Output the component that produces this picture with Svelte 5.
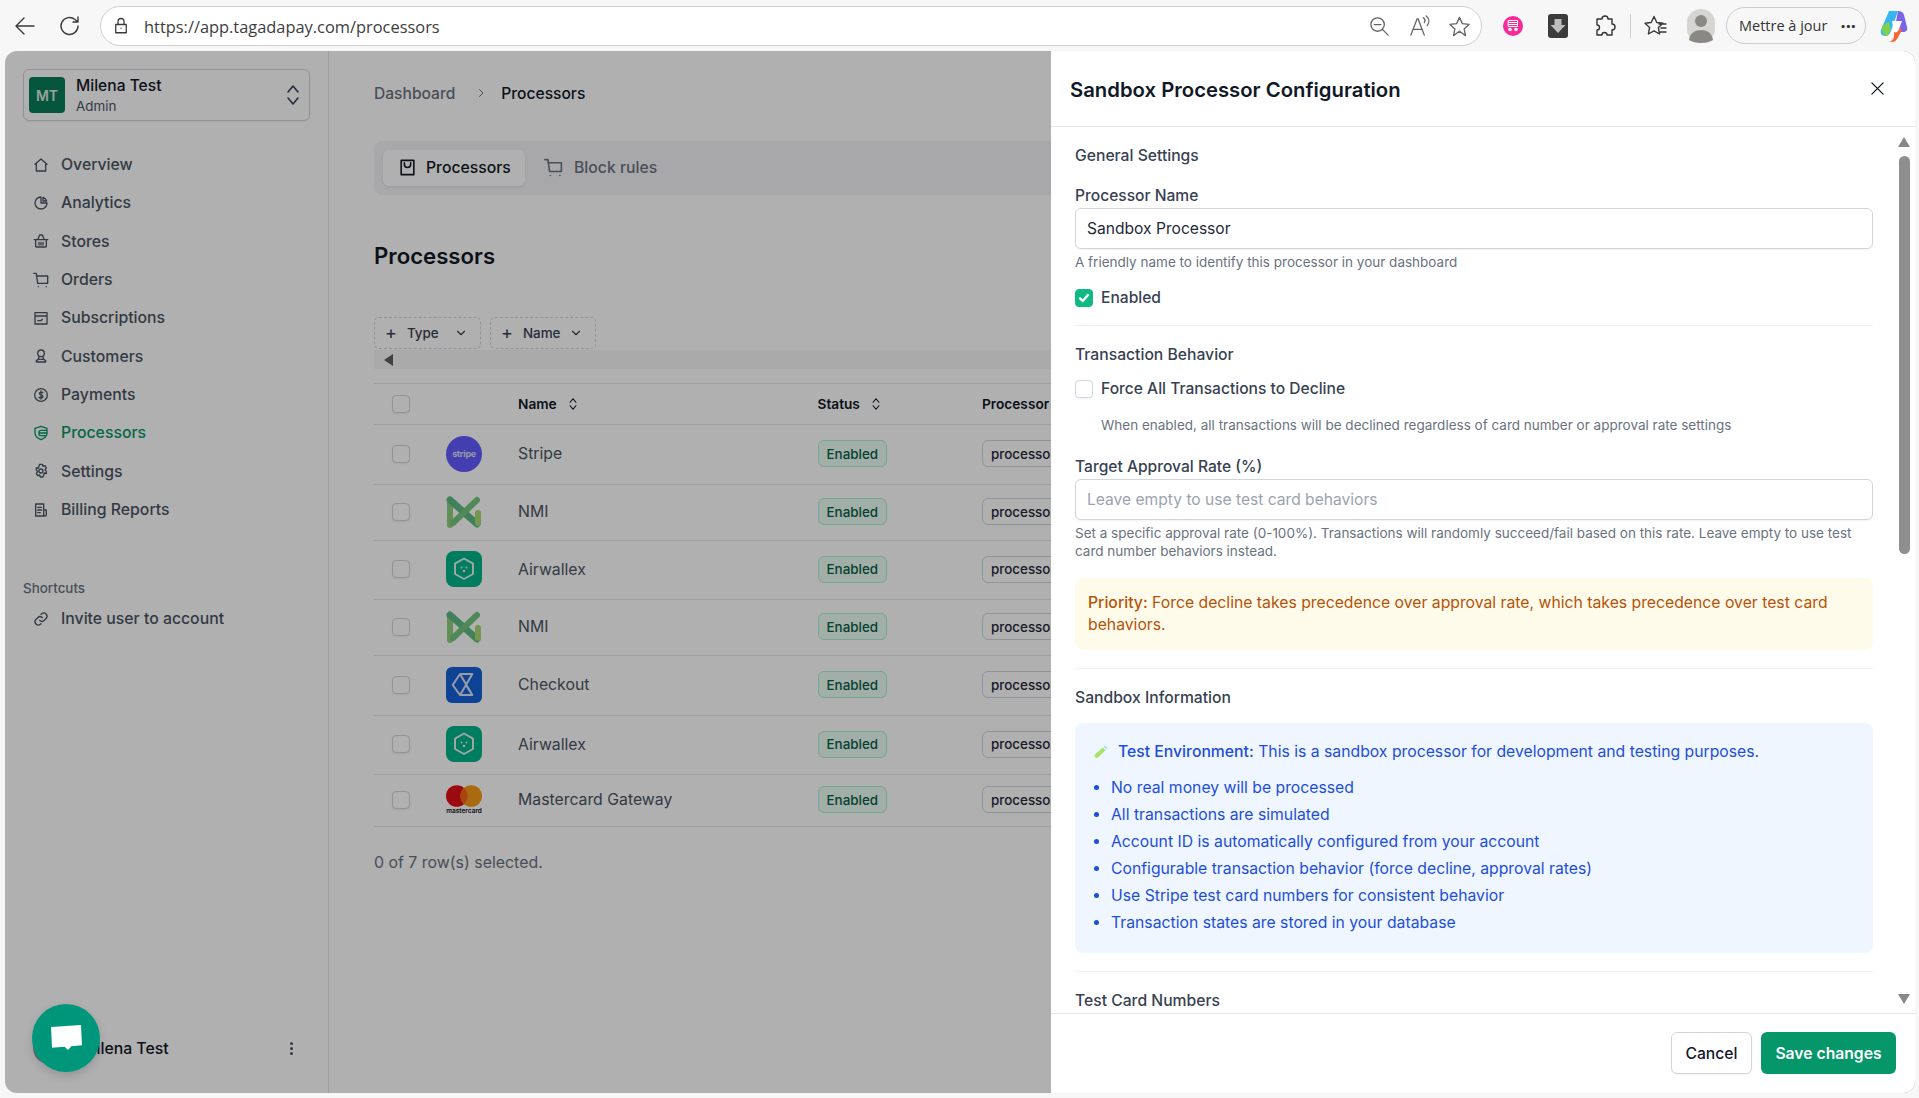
<script>
  const nav = [
    { label: 'Overview', d: 'M3 11l9-8 9 8M5 10v11h14V10' },
    { label: 'Analytics', d: 'M21 12a9 9 0 1 1-9-9v9zM15 3.500A9 9 0 0 1 20.500 9H15z' },
    { label: 'Stores', d: 'M4 10h16v10a1 1 0 0 1-1 1H5a1 1 0 0 1-1-1zM2 10h20M7 10l3-7h4l3 7M9 14v4M12 14v4M15 14v4' },
    { label: 'Orders', d: 'M1 2h4l2 15h15V6H5M8 22h.01M20 22h.01' },
    { label: 'Subscriptions', d: 'M3 4h18v17H3zM3 9h18M7 16h5l2-2' },
    { label: 'Customers', d: 'M12 3a5 5 0 1 1 0 10 5 5 0 0 1 0-10zM9 13l-1 4h8l-1-4M5 21v-2l3-2h8l3 2v2z' },
    { label: 'Payments', d: 'M12 2.500a9.500 9.500 0 1 1 0 19 9.500 9.500 0 0 1 0-19zM15 8.500c-1-1-5-1.500-5.500 1S14.500 12 15 14s-4 3.500-6 1.500M12 6v12' },
    { label: 'Processors', d: 'M12 2l9 3v7c0 5-4 8-9 10-5-2-9-5-9-10V5zM21 8h-9a3 3 0 0 0-3 3v2a3 3 0 0 0 3 3h6M10 12h11', active: true },
    { label: 'Settings', d: 'M12 9a3 3 0 1 1 0 6 3 3 0 0 1 0-6zM10 2h4l1 3 3-1 2 3.500-2 2.500 2 2.500L20 16l-3-1-1 3.500-1 2.500h-4l-1-3-3 1-2-3.500 2-2.500-2-2.500L5 7l3 1z' },
    { label: 'Billing Reports', d: 'M4 3h12v18H4zM16 12h4v7a2 2 0 0 1-2 2H4M7 8h6M7 12h6M7 16h4' }
  ];
  const rows = [
    { name: 'Stripe', logo: 'stripe' },
    { name: 'NMI', logo: 'nmi' },
    { name: 'Airwallex', logo: 'air' },
    { name: 'NMI', logo: 'nmi' },
    { name: 'Checkout', logo: 'chk' },
    { name: 'Airwallex', logo: 'air' },
    { name: 'Mastercard Gateway', logo: 'mc' }
  ];
  const items = [
    'No real money will be processed',
    'All transactions are simulated',
    'Account ID is automatically configured from your account',
    'Configurable transaction behavior (force decline, approval rates)',
    'Use Stripe test card numbers for consistent behavior',
    'Transaction states are stored in your database'
  ];
</script>

<div class="root">
  <header class="chrome">
    <svg class="ci back" viewBox="0 0 24 24"><path d="M21 12H3M11 4l-8 8 8 8"/></svg>
    <svg class="ci reload" viewBox="0 0 24 24"><path d="M20 12a8.500 8.500 0 1 1-3-6.500L20 8M20 3v5h-5"/></svg>
    <div class="url">
      <svg class="lock" viewBox="0 0 24 24"><path d="M5 10h14v11H5zM8 10V6a4 4 0 0 1 8 0v4M12 15h.01"/></svg>
      <span class="urltext">https://app.tagadapay.com/processors</span>
      <div class="urlicons">
        <svg class="ci small" viewBox="0 0 24 24"><path d="M10 3a7 7 0 1 1 0 14 7 7 0 0 1 0-14zM6.500 10h7M15 15l6 6"/></svg>
        <svg class="ci small" viewBox="0 0 24 24"><path d="M3 21L9.500 4h1L17 21M5.500 15h9.500M16 3c2 1 2 3 1 5M19 1c3.500 3 3.500 7 1 10"/></svg>
        <svg class="ci small" viewBox="0 0 24 24"><path d="M12 2.500l3 6.500 7 .8-5.200 4.700 1.500 7L12 17l-6.300 4.500 1.500-7L2 9.800 9 9z"/></svg>
      </div>
    </div>
    <div class="exts">
      <svg class="pink" viewBox="0 0 20 20">
        <circle cx="10" cy="10" r="10" fill="#f72a9b" stroke="none"/>
        <path d="M5.500 4.500h9v6h-9zM5.500 6.500h9M5.500 8.500h9" stroke="#fff" stroke-width="1"/>
        <circle cx="7" cy="13.500" r="1.800" fill="#fff" stroke="none"/>
        <circle cx="13" cy="13.500" r="1.800" fill="#fff" stroke="none"/>
      </svg>
      <svg class="dl filled" viewBox="0 0 20 24"><rect width="20" height="24" rx="3" fill="#3b3b3b"/><path d="M6.500 5h7v6h4L10 19 2.500 11h4z" fill="#bdbdbd"/></svg>
      <svg class="ci puzzle" viewBox="0 0 24 24"><path d="M9 5a3 3 0 0 1 6 0h4v5a3 3 0 0 1 0 6v5h-5a2.500 2.500 0 0 0-5 0H4v-5a2.500 2.500 0 0 0 0-5V5z"/></svg>
      <span class="vdiv"></span>
      <svg class="ci fav" viewBox="0 0 24 24"><path d="M11 2.500l2.800 6 6.200.8-4.600 4.200 1.200 6.500-5.600-3.200-5.600 3.200 1.200-6.500L2 9.300l6.200-.8zM16 10h7M18 14h5M17.500 18h5.500"/></svg>
      <svg class="profile filled" viewBox="0 0 28 34"><rect width="28" height="34" rx="14" fill="#d6d5d1"/><circle cx="14" cy="12" r="6" fill="#8a8884"/><path d="M2 31c1-7 6-10 12-10s11 3 12 10c-3 2-7 3-12 3s-9-1-12-3z" fill="#8a8884"/></svg>
      <div class="update"><span>Mettre à jour</span><span class="dots">···</span></div>
      <svg class="copilot filled" viewBox="0 0 28 32">
        <path d="M9 1h9l-7 20c-1 3-3 5-6 5-3 0-5-3-4-6z" fill="#38b6f1"/>
        <path d="M18 1c3 0 5 1 6 4l3 12c1 3-1 5-4 5h-9z" fill="#7a63e8"/>
        <path d="M2 16c0 4 1 10 5 10l4-6-2-8z" fill="#7ed04b"/>
        <path d="M14 12l8 8-5 9c-1 2-3 3-5 3H8c3 0 5-2 6-5z" fill="#f6652f"/>
        <path d="M12 11h10l-3 8c-1 3-3 4-5 3z" fill="#fff"/>
      </svg>
    </div>
  </header>

  <div class="card">
    <div class="app">
      <aside class="sidebar">
        <div class="selector">
          <span class="avatar">MT</span>
          <div class="who"><strong>Milena Test</strong><small>Admin</small></div>
          <svg class="updown" viewBox="0 0 14 24"><path d="M2 9l5-6 5 6M2 15l5 6 5-6"/></svg>
        </div>
        <nav class="nav">
          {#each nav as n}
            <a class="item" class:active={n.active} href="#/">
              <svg class="nicon" viewBox="0 0 24 24"><path d={n.d}/></svg>
              <span>{n.label}</span>
            </a>
          {/each}
        </nav>
        <div class="short">Shortcuts</div>
        <a class="item invite" href="#/">
          <svg class="nicon" viewBox="0 0 24 24"><path d="M10 14a5 5 0 0 0 7 0l3-3a5 5 0 0 0-7-7l-1 1M14 10a5 5 0 0 0-7 0l-3 3a5 5 0 0 0 7 7l1-1"/></svg>
          <span>Invite user to account</span>
        </a>
        <div class="foot">
          <span class="fava"></span>
          <span class="fname">Milena Test</span>
          <span class="kebab"><i></i><i></i><i></i></span>
        </div>
      </aside>

      <main class="main">
        <div class="crumb"><span>Dashboard</span><svg viewBox="0 0 24 24"><path d="M9 5l7 7-7 7"/></svg><b>Processors</b></div>
        <div class="tabs">
          <div class="tab on">
            <svg viewBox="0 0 24 24"><path d="M4 3h16v18H4zM8 6v2a4 4 0 0 0 8 0V6"/></svg>
            <span>Processors</span>
          </div>
          <div class="tab off">
            <svg viewBox="0 0 24 24"><path d="M1 2h4l2 15h15V6H5M8 22h.01M20 22h.01"/></svg>
            <span>Block rules</span>
          </div>
        </div>
        <h1>Processors</h1>
        <div class="filters">
          <div class="filter type"><span class="plus">+</span><span>Type</span><svg viewBox="0 0 24 24"><path d="M6 9l6 6 6-6"/></svg></div>
          <div class="filter name"><span class="plus">+</span><span>Name</span><svg viewBox="0 0 24 24"><path d="M6 9l6 6 6-6"/></svg></div>
        </div>
        <div class="hscroll"><i></i></div>
        <div class="table">
          <div class="row head">
            <span class="cb"></span>
            <span></span>
            <span class="th">Name<svg viewBox="0 0 14 24"><path d="M2 9l5-6 5 6M2 15l5 6 5-6"/></svg></span>
            <span class="th">Status<svg viewBox="0 0 14 24"><path d="M2 9l5-6 5 6M2 15l5 6 5-6"/></svg></span>
            <span class="th">Processor</span>
          </div>
          {#each rows as r}
            <div class="row">
              <span class="cb"></span>
              <span class="logo">
                {#if r.logo === 'stripe'}
                  <span class="stripe">stripe</span>
                {:else if r.logo === 'nmi'}
                  <svg viewBox="0 0 36 36">
                    <path d="M4 6v25" stroke="#8fd07c" stroke-width="6"/>
                    <path d="M4 6l27 24" stroke="#5dba84" stroke-width="7"/>
                    <path d="M31 6L7 29" stroke="#74c57e" stroke-width="6"/>
                    <path d="M32 19v10" stroke="#a9da74" stroke-width="6"/>
                  </svg>
                {:else if r.logo === 'air'}
                  <svg viewBox="0 0 36 36" class="filled">
                    <rect width="36" height="36" rx="8" fill="#00b48a"/>
                    <path d="M18 7.500l9 5.200V23l-9 5-9-5V12.700z" fill="none" stroke="#e2f2ec" stroke-width="2"/>
                    <circle cx="15.500" cy="16.500" r="1" fill="#e2f2ec"/>
                    <circle cx="20.500" cy="16.500" r="1" fill="#e2f2ec"/>
                    <circle cx="18" cy="20" r="1.300" fill="#e2f2ec"/>
                  </svg>
                {:else if r.logo === 'chk'}
                  <svg viewBox="0 0 36 36" class="filled">
                    <rect width="36" height="36" rx="6" fill="#1560d8"/>
                    <path d="M14 7h12.300L20 18l6.300 10H14L6.700 18zM14 7l12.300 21M14 28l6-10" fill="none" stroke="#dbe3f2" stroke-width="2" stroke-linejoin="round"/>
                  </svg>
                {:else}
                  <svg class="mc filled" viewBox="0 0 36 22">
                    <circle cx="10.800" cy="11" r="10.800" fill="#e20f17"/>
                    <circle cx="25.200" cy="11" r="10.800" fill="#f79a18"/>
                    <path d="M18 3a10.800 10.800 0 0 1 0 16 10.800 10.800 0 0 1 0-16z" fill="#f2651a"/>
                  </svg>
                  <span class="mctext">mastercard</span>
                {/if}
              </span>
              <span class="cname">{r.name}</span>
              <span><span class="badge green">Enabled</span></span>
              <span><span class="badge gray">processor</span></span>
            </div>
          {/each}
        </div>
        <p class="selected">0 of 7 row(s) selected.</p>
      </main>
    </div>

    <div class="dim"></div>

    <section class="panel">
      <div class="phead">
        <h2>Sandbox Processor Configuration</h2>
        <svg class="close" viewBox="0 0 24 24"><path d="M3 3l18 18M21 3L3 21"/></svg>
      </div>
      <div class="pbody">
        <h3 class="first">General Settings</h3>
        <label class="lab l1" for="pn">Processor Name</label>
        <input id="pn" class="inp" value="Sandbox Processor" />
        <p class="help h1">A friendly name to identify this processor in your dashboard</p>
        <div class="check c1">
          <span class="box on"><svg viewBox="0 0 24 24"><path d="M6 12.500l4 4 8-9"/></svg></span>
          <span>Enabled</span>
        </div>
        <hr />
        <h3 class="tb">Transaction Behavior</h3>
        <div class="check c2"><span class="box"></span><span>Force All Transactions to Decline</span></div>
        <p class="help h2">When enabled, all transactions will be declined regardless of card number or approval rate settings</p>
        <label class="lab l2" for="ar">Target Approval Rate (%)</label>
        <input id="ar" class="inp" placeholder="Leave empty to use test card behaviors" />
        <p class="help h3">Set a specific approval rate (0-100%). Transactions will randomly succeed/fail based on this rate. Leave empty to use test card number behaviors instead.</p>
        <div class="priority">
          <div><b>Priority:</b> <span>Force decline takes precedence over approval rate, which takes precedence over test card</span></div>
          <div>behaviors.</div>
        </div>
        <hr />
        <h3 class="si">Sandbox Information</h3>
        <div class="info">
          <div class="envline">
            <svg class="tube filled" viewBox="0 0 18 18">
              <path d="M11 4l3 3-8 8c-1 1-2.500 1-3.500 0s-1-2.500 0-3.500z" fill="#a7e36a"/>
              <path d="M13 1l4 4-2 1-3-3z" fill="#b9d6ef"/>
            </svg>
            <span><b>Test Environment:</b> This is a sandbox processor for development and testing purposes.</span>
          </div>
          <ul>
            {#each items as it}<li>{it}</li>{/each}
          </ul>
        </div>
        <hr />
        <h3 class="tc">Test Card Numbers</h3>
        <div class="bar"><i class="up"></i><i class="thumb"></i><i class="down"></i></div>
      </div>
      <div class="pfoot">
        <button class="btn cancel">Cancel</button>
        <button class="btn save">Save changes</button>
      </div>
    </section>

    <div class="fab">
      <svg class="filled" viewBox="0 0 34 30"><path d="M1 3l31-2 1 21-11 1-3.500 4L15 23.500l-13 1z" fill="#fff"/></svg>
    </div>
  </div>
</div>

<style>
  :global(body) { margin: 0; font-family: Inter, "Liberation Sans", sans-serif; }
  .root { width: 1919px; height: 1098px; background: #f7f7f7; overflow: hidden; display: flex; flex-direction: column; }
  svg { display: block; flex: none; fill: none; stroke: currentColor; stroke-width: 2; stroke-linecap: round; stroke-linejoin: round; }
  svg.filled { stroke: none; }

  .chrome { height: 51px; flex: none; display: flex; align-items: center; padding-left: 13px; color: #3a3a3a; box-sizing: border-box; }
  .ci { width: 24px; height: 24px; stroke-width: 1.400; }
  .back { margin-right: 21px; }
  .reload { margin-right: 18px; }
  .url { width: 1382px; height: 40px; box-sizing: border-box; background: #fff; border: 1px solid #cfcfcf; border-radius: 20px; display: flex; align-items: center; padding-left: 11px; margin-top: 1px; }
  .lock { width: 18px; height: 18px; margin-right: 14px; stroke-width: 1.700; }
  .urltext { font: 400 16.400px "Open Sans", sans-serif; color: #3d3d3d; }
  .urlicons { margin-left: auto; display: flex; gap: 17px; padding-right: 10px; color: #666; }
  .small { width: 23px; height: 23px; }
  .exts { display: flex; align-items: center; margin-left: 21px; }
  .pink { width: 20px; height: 20px; margin-right: 25px; }
  .dl { width: 20px; height: 24px; margin-right: 25px; }
  .puzzle { margin-right: 13px; color: #333; }
  .vdiv { width: 1px; height: 24px; background: #cfcfcf; margin-right: 12px; }
  .fav { margin-right: 20px; }
  .profile { width: 28px; height: 34px; margin-right: 11px; }
  .update { width: 140px; height: 37px; box-sizing: border-box; border: 1px solid #cdcdcd; border-radius: 19px; display: flex; align-items: center; justify-content: space-between; padding: 0 9px 0 12px; font: 400 14.500px "Open Sans", sans-serif; color: #333; margin-right: 14px; }
  .dots { font-weight: 700; font-size: 18px; letter-spacing: 0; }
  .copilot { width: 28px; height: 32px; }

  .card { position: relative; margin-left: 5px; width: 1910px; height: 1042px; border-radius: 12px; overflow: hidden; background: #fff; }
  .app { display: flex; height: 100%; }
  .dim { position: absolute; inset: 0; background: rgba(0,0,0,.31); }

  .sidebar { width: 324px; flex: none; box-sizing: border-box; border-right: 1px solid #e5e7eb; padding: 18px 0 0 18px; display: flex; flex-direction: column; color: #4b5563; }
  .selector { width: 287px; height: 52px; box-sizing: border-box; border: 1px solid #d1d5db; border-radius: 6px; display: flex; align-items: center; padding-left: 5px; box-shadow: 0 1px 2px rgba(0,0,0,.05); }
  .avatar { width: 36px; height: 36px; border-radius: 4px; background: #097d59; color: #dbe9e3; font: 600 14px Inter, sans-serif; display: flex; align-items: center; justify-content: center; }
  .who { margin-left: 11px; display: flex; flex-direction: column; line-height: 20px; flex: 1; padding-top: 2px; }
  .who strong { font-weight: 500; font-size: 15.600px; color: #111827; }
  .who small { font-size: 13.400px; color: #4b5563; }
  .updown { width: 14px; height: 24px; margin-right: 9px; color: #374151; stroke-width: 1.600; }
  .nav { margin-top: 25px; display: flex; flex-direction: column; }
  .item { height: 38.330px; box-sizing: border-box; padding-bottom: 1px; display: flex; align-items: center; padding-left: 10px; gap: 12px; color: #4b5563; text-decoration: none; font-size: 15.800px; font-weight: 500; }
  .item.active { color: #059669; }
  .nicon { width: 16px; height: 16px; }
  .short { margin-top: 50px; font-size: 13.400px; font-weight: 500; color: #6b7280; line-height: 18px; }
  .invite { margin-top: 3px; }
  .foot { margin-top: auto; margin-bottom: 27px; display: flex; align-items: center; height: 36px; padding-left: 10px; }
  .fava { width: 32px; height: 32px; border-radius: 50%; background: #9aa0a6; }
  .fname { margin-left: 17px; font-size: 15.800px; font-weight: 500; color: #111827; }
  .kebab { margin-left: auto; margin-right: 35px; display: flex; flex-direction: column; gap: 2px; }
  .kebab i { width: 3px; height: 3px; border-radius: 50%; background: #4b5563; }

  .main { flex: 1; min-width: 0; padding: 0 0 0 45px; overflow: hidden; box-sizing: border-box; }
  .crumb { margin-top: 32px; height: 20px; display: flex; align-items: center; font-size: 15.600px; color: #6b7280; font-weight: 500; }
  .crumb svg { width: 12px; height: 12px; margin: 0 14px 0 20px; }
  .crumb b { font-weight: 500; color: #111827; }
  .tabs { margin-top: 38px; height: 54px; box-sizing: border-box; background: #f3f4f6; border-radius: 8px; display: flex; align-items: center; padding-left: 9px; }
  .tab { height: 36px; box-sizing: border-box; padding: 0 14px 2px 16px; display: flex; align-items: center; gap: 10px; font-size: 15.750px; font-weight: 500; color: #6b7280; border-radius: 6px; }
  .tab svg { width: 19px; height: 19px; }
  .tab.on { color: #111827; background: #fff; box-shadow: 0 1px 3px rgba(0,0,0,.1); width: 142px; gap: 9px; padding-left: 15px; }
  .tab.off { padding-left: 19px; gap: 11px; }
  h1 { margin: 46px 0 0; font-size: 22.200px; line-height: 30px; font-weight: 600; color: #111827; }
  .filters { margin-top: 46px; display: flex; gap: 9px; }
  .filter { height: 32px; box-sizing: border-box; border: 1px dashed #d1d5db; border-radius: 5px; display: flex; align-items: center; font-size: 13.400px; font-weight: 500; color: #374151; padding-left: 10px; }
  .filter.type { width: 107px; }
  .filter.name { width: 106px; }
  .plus { font-size: 18px; font-weight: 400; margin-right: 10px; line-height: 1; }
  .filter svg { width: 14px; height: 14px; margin-left: auto; margin-right: 12px; }
  .hscroll { height: 19px; margin-top: 1px; background: #f7f7f7; display: flex; align-items: center; padding-left: 10px; }
  .hscroll i { width: 0; height: 0; border-style: solid; border-width: 6px 9px 6px 0; border-color: transparent #5e5e5e transparent transparent; }
  .table { margin-top: 14px; border-top: 1px solid #e5e7eb; }
  .row { display: grid; grid-template-columns: 72px 72px 299.500px 164.500px 1fr; align-items: center; border-bottom: 1px solid #e5e7eb; box-sizing: border-box; padding-bottom: 2px; font-size: 15px; color: #4b5563; height: 59px; }
  .row.head { height: 41px; padding-bottom: 1px; }
  .row:nth-child(2) { height: 60px; }
  .row:nth-child(3) { height: 56px; }
  .row:nth-child(4) { height: 59px; }
  .row:nth-child(5) { height: 56px; }
  .row:nth-child(6) { height: 60px; }
  .row:nth-child(7) { height: 59px; }
  .row:nth-child(8) { height: 52px; }
  .cb { display: block; width: 18px; height: 18px; box-sizing: border-box; margin-left: 18px; border: 1px solid #d1d5db; border-radius: 4px; background: #fff; box-shadow: 0 1px 2px rgba(0,0,0,.06); }
  .th { color: #111827; font-weight: 600; font-size: 13.700px; display: flex; align-items: center; gap: 11px; white-space: nowrap; }
  .th svg { width: 10px; height: 14px; }
  .logo { width: 36px; display: block; }
  .logo svg { width: 36px; height: 36px; }
  .logo svg.mc { height: 22px; }
  .stripe { width: 36px; height: 36px; border-radius: 50%; background: #635bff; color: #dcdcf5; font-size: 9px; font-weight: 700; display: flex; align-items: center; justify-content: center; letter-spacing: -.3px; }
  .mctext { display: block; font-size: 6.500px; line-height: 7px; margin-top: 1px; color: #111; text-align: center; white-space: nowrap; font-weight: 600; }
  .cname { font-size: 15.800px; font-weight: 400; }
  .badge { display: inline-flex; height: 27px; align-items: center; padding: 0 8px; box-sizing: border-box; border-radius: 6px; font-size: 13.400px; font-weight: 500; white-space: nowrap; border: 1px solid; }
  .green { background: #ebfdf4; color: #065f46; border-color: #a7f3d0; width: 69px; }
  .gray { background: #fff; color: #1f2937; border-color: #d1d5db; }
  .selected { margin: 26px 0 0; font-size: 15.900px; color: #6b7280; line-height: 20px; }

  .panel { position: absolute; left: 1046px; top: 0; width: 864px; height: 100%; background: #fff; display: flex; flex-direction: column; border-radius: 0 12px 12px 0; }
  .phead { height: 76px; flex: none; box-sizing: border-box; border-bottom: 1px solid #e5e7eb; display: flex; align-items: center; justify-content: space-between; padding: 2px 30px 0 19px; }
  h2 { margin: 0; font-size: 20.300px; font-weight: 600; color: #111827; }
  .close { width: 15px; height: 15px; color: #111827; margin-top: -2px; }
  .pbody { flex: 1; min-height: 0; overflow: hidden; position: relative; padding: 0 42px 0 24px; }
  h3 { margin: 18px 0 0; font-size: 15.700px; line-height: 20px; font-weight: 500; color: #374151; }
  h3.first { margin-top: 19px; }
  h3.tb { margin-top: 19px; }
  h3.si { margin-top: 19px; }
  h3.tc { margin-top: 19px; }
  .lab { display: block; font-size: 15.600px; line-height: 20px; font-weight: 500; color: #374151; }
  .l1 { margin-top: 20px; }
  .l2 { margin-top: 23px; }
  .inp { display: block; width: 100%; height: 41px; margin-top: 2px; box-sizing: border-box; border: 1px solid #d1d5db; border-radius: 6px; padding: 0 11px; font: 400 15.600px Inter, sans-serif; color: #1f2937; outline: none; box-shadow: 0 1px 2px rgba(0,0,0,.05); }
  .inp::placeholder { color: #9ca3af; opacity: 1; }
  .help { margin: 0; font-size: 13.500px; line-height: 18px; color: #6b7280; }
  .h1 { margin-top: 4px; }
  .h2 { margin-top: 18px; padding-left: 26px; }
  .h3 { margin-top: 5px; line-height: 17.600px; }
  .check { display: flex; align-items: center; gap: 8px; font-size: 15.600px; color: #374151; font-weight: 500; height: 18px; }
  .check > span:last-child { padding-bottom: 2px; }
  .c1 { margin-top: 18px; }
  .c2 { margin-top: 15px; }
  .box { width: 18px; height: 18px; box-sizing: border-box; border: 1px solid #d1d5db; border-radius: 4px; background: #fff; box-shadow: 0 1px 2px rgba(0,0,0,.05); }
  .box.on { background: #10b981; border-color: #10b981; color: #fff; }
  .box svg { stroke-width: 3.500; }
  hr { border: 0; height: 1px; margin: 18px 0 0; background: #f0f1f3; }
  .priority { margin-top: 18px; background: #fffbeb; border-radius: 8px; padding: 14px 13px; font-size: 15.750px; line-height: 22px; color: #b45309; }
  .priority b { font-weight: 500; }
  .info { margin-top: 15px; height: 230px; box-sizing: border-box; background: #eff6ff; border-radius: 8px; padding: 18px 18px 0; color: #1d4ed8; font-size: 15.750px; }
  .envline { display: flex; align-items: center; line-height: 22px; gap: 9px; }
  .envline b { font-weight: 500; }
  .tube { width: 16px; height: 16px; }
  ul { margin: 11px 0 0; padding: 0 0 0 18px; line-height: 27px; }
  li { padding-left: 0; }
  .bar { position: absolute; right: 5px; top: 0; bottom: 0; width: 11px; }
  .bar i { position: absolute; display: block; }
  .up { top: 10px; left: -1px; border-style: solid; border-width: 0 6.500px 10px; border-color: transparent transparent #888; }
  .down { bottom: 9px; left: -1px; border-style: solid; border-width: 10px 6.500px 0; border-color: #888 transparent transparent; }
  .thumb { top: 29px; left: 0; width: 11px; height: 398px; border-radius: 6px; background: #8e8e8e; }
  .pfoot { height: 80px; flex: none; box-sizing: border-box; border-top: 1px solid #e5e7eb; display: flex; justify-content: flex-end; align-items: flex-start; gap: 9px; padding: 18px 19px 0 0; }
  .btn { height: 42px; border-radius: 6px; font: 500 15.700px Inter, sans-serif; box-sizing: border-box; }
  .cancel { width: 81px; background: #fff; border: 1px solid #d1d5db; color: #111827; box-shadow: 0 1px 2px rgba(0,0,0,.05); }
  .save { width: 135px; background: #059669; border: 0; color: #fff; font-weight: 600; }

  .fab { position: absolute; left: 27px; top: 953px; width: 68px; height: 68px; border-radius: 50%; background: #00967b; display: flex; align-items: center; justify-content: center; box-shadow: 0 4px 10px rgba(0,0,0,.15); }
  .fab svg { width: 33px; height: 29px; }
</style>
